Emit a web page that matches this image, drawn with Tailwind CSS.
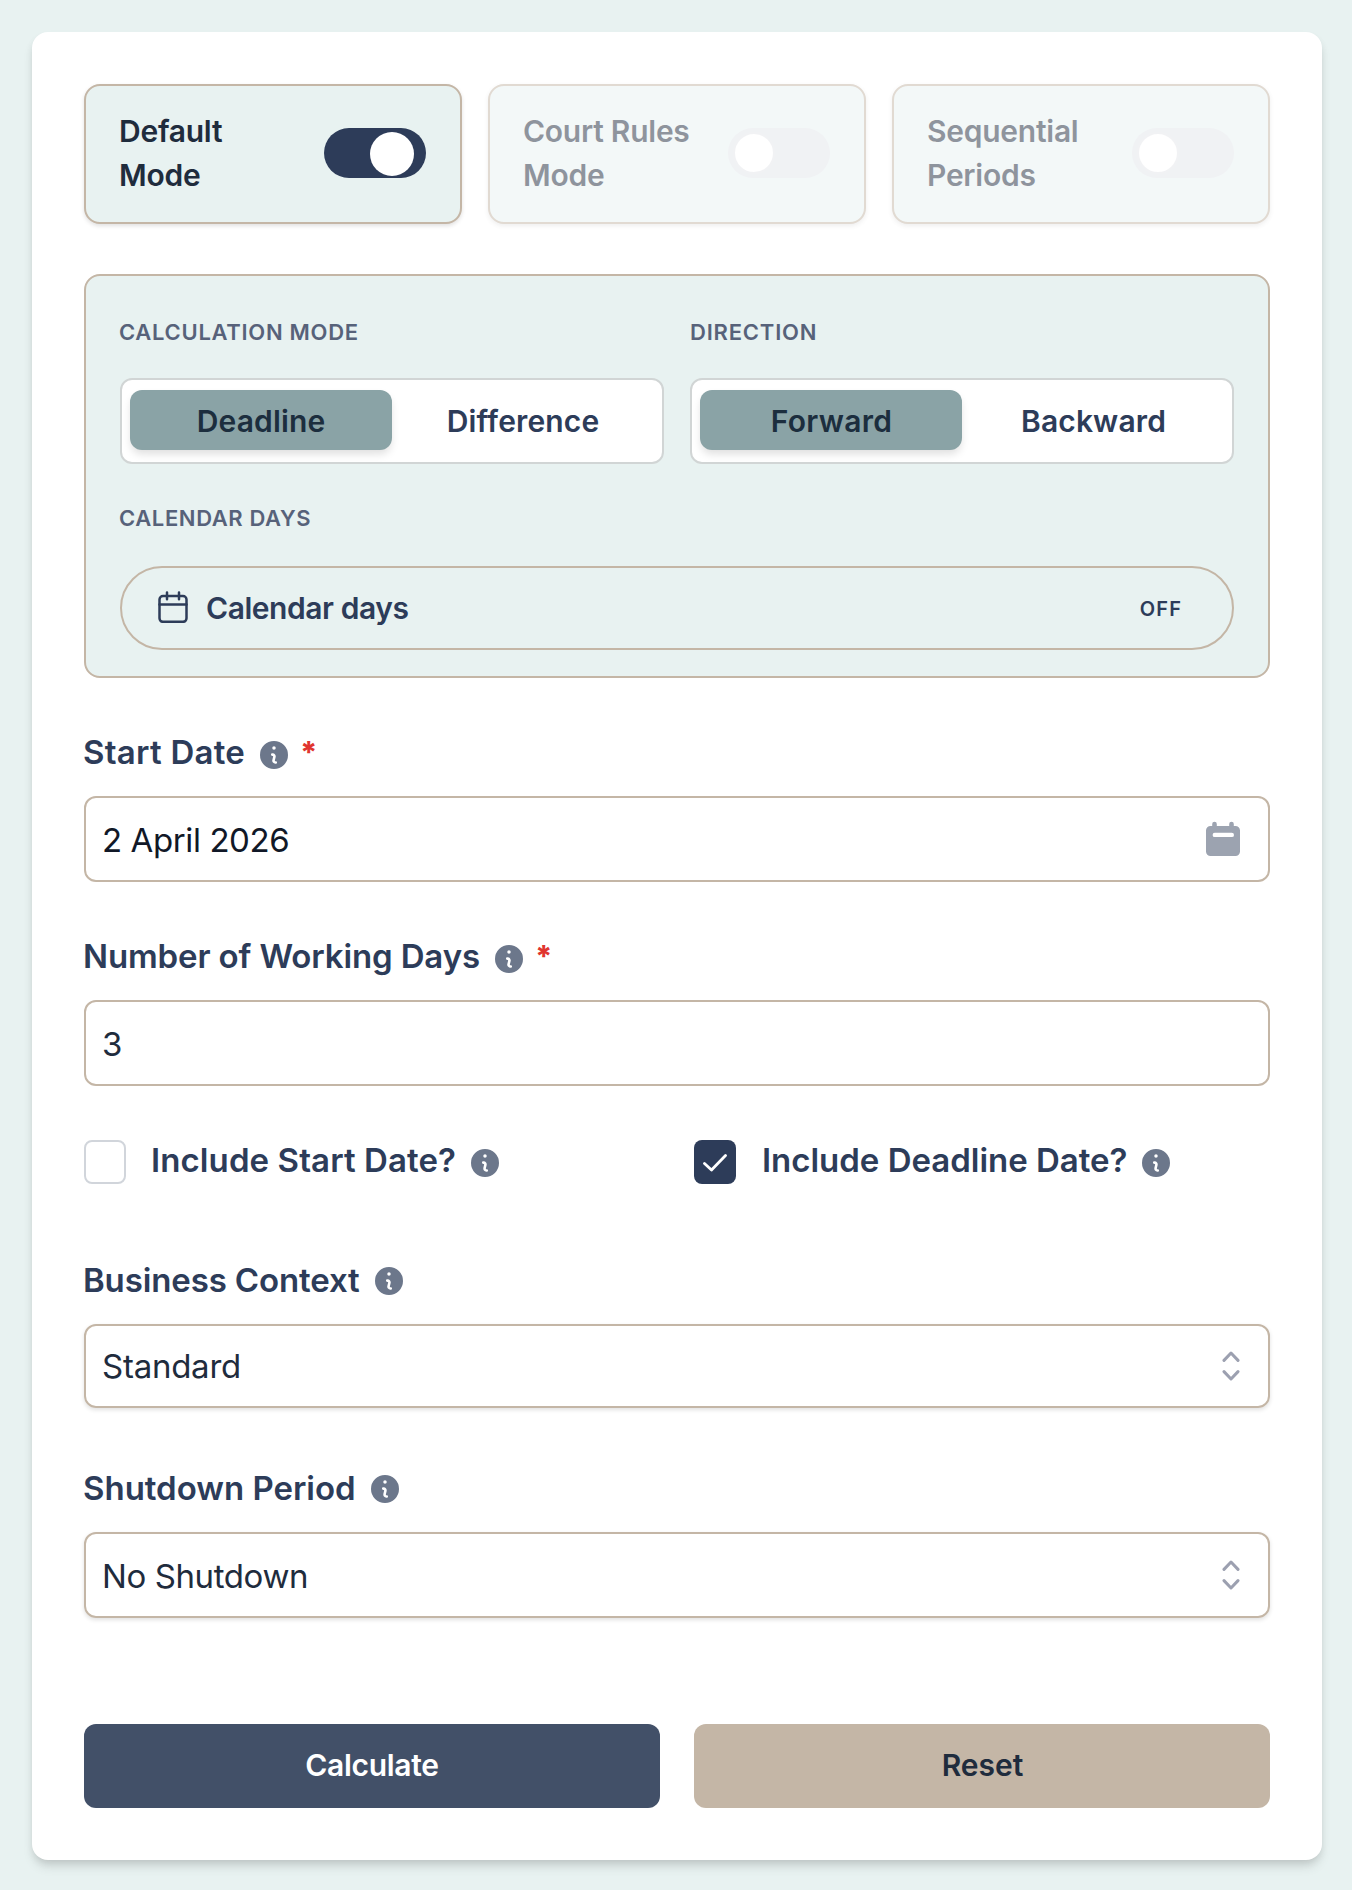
<!DOCTYPE html>
<html lang="en">
<head>
    <meta charset="UTF-8">
    <meta name="viewport" content="width=device-width, initial-scale=1.0">
    <title>Deadline Calculator</title>
    <script src="https://cdn.jsdelivr.net/npm/@tailwindcss/browser@4"></script>
</head>
<body class="min-h-screen bg-[#e8f2f1] px-[30px] pt-8 font-['Inter',sans-serif] text-[#2d3c59]">
    <!-- Shared icons -->
    <svg class="hidden">
        <symbol id="info" viewBox="2 2 16 16">
            <path fill="currentColor" fill-rule="evenodd" clip-rule="evenodd" d="M18 10a8 8 0 11-16 0 8 8 0 0116 0zm-7-4a1 1 0 11-2 0 1 1 0 012 0zM9 9a.75.75 0 000 1.5h.253a.25.25 0 01.244.304l-.459 2.066A1.75 1.75 0 0010.747 15H11a.75.75 0 000-1.5h-.253a.25.25 0 01-.244-.304l.459-2.066A1.75 1.75 0 009.253 9H9z"/>
        </symbol>
        <symbol id="updown" viewBox="0 0 18 30">
            <path fill="none" stroke="currentColor" stroke-width="3" stroke-linecap="round" stroke-linejoin="round" d="M2 9.400l7-7.400 7 7.400M2 20.600l7 7.400 7-7.400"/>
        </symbol>
    </svg>

    <div class="ml-0.5 h-[1828px] w-[1290px] rounded-2xl bg-white p-[52px] shadow-[0_8px_12px_-2px_rgba(0,0,0,0.12),0_4px_8px_-2px_rgba(0,0,0,0.1)]">
        <!-- Mode cards -->
        <div class="grid grid-cols-3 gap-[26px] text-[30px] leading-[44px] font-semibold tracking-[-0.25px] text-[#1f2c3d]">
            <div class="flex h-[140px] items-center justify-between rounded-2xl border-2 border-[#c4b6a6] bg-[#e8f2f1] pr-[34px] pb-0.5 pl-[33px] shadow-[0_2px_4px_rgba(0,0,0,0.12)]">
                <span>Default<br>Mode</span>
                <button class="flex h-[50px] w-[102px] items-center justify-end rounded-full bg-[#2d3c59] pt-0.5 pr-3">
                    <span class="size-11 rounded-full bg-white"></span>
                </button>
            </div>
            <div class="flex h-[140px] items-center justify-between rounded-2xl border-2 border-[#c4b6a6] bg-[#e8f2f3] pr-[34px] pb-0.5 pl-[33px] opacity-50 shadow-[0_2px_4px_rgba(0,0,0,0.12)]">
                <span>Court Rules<br>Mode</span>
                <button class="flex h-[50px] w-[102px] items-center rounded-full bg-[#e3e6ea] pl-[5px]">
                    <span class="size-[42px] rounded-full border-2 border-gray-200 bg-white"></span>
                </button>
            </div>
            <div class="flex h-[140px] items-center justify-between rounded-2xl border-2 border-[#c4b6a6] bg-[#e8f2f3] pr-[34px] pb-0.5 pl-[33px] opacity-50 shadow-[0_2px_4px_rgba(0,0,0,0.12)]">
                <span>Sequential<br>Periods</span>
                <button class="flex h-[50px] w-[102px] items-center rounded-full bg-[#e3e6ea] pl-[5px]">
                    <span class="size-[42px] rounded-full border-2 border-gray-200 bg-white"></span>
                </button>
            </div>
        </div>

        <!-- Calculation options -->
        <div class="mt-[50px] h-[404px] rounded-2xl border-2 border-[#c4b6a6] bg-[#e8f2f1] px-[34px] pt-10">
            <div class="grid grid-cols-2 gap-[26px]">
                <div>
                    <h3 class="-ml-px text-[22px] leading-8 font-semibold tracking-[0.7px] text-[#57627a]">CALCULATION MODE</h3>
                    <div class="mt-[30px] grid h-[86px] grid-cols-2 items-center rounded-xl border-2 border-[#d1d5d5] bg-white px-2 pb-0.5 text-[30px] font-semibold tracking-[0.15px]">
                        <button class="h-[60px] rounded-xl bg-[#8aa3a6] pt-0.5 text-[#1c2e3e] shadow-[0_5px_8px_-1px_rgba(0,0,0,0.13)]">Deadline</button>
                        <button class="h-[60px] pt-0.5">Difference</button>
                    </div>
                </div>
                <div>
                    <h3 class="text-[22px] leading-8 font-semibold tracking-[0.8px] text-[#57627a]">DIRECTION</h3>
                    <div class="mt-[30px] grid h-[86px] grid-cols-2 items-center rounded-xl border-2 border-[#d1d5d5] bg-white px-2 pb-0.5 text-[30px] font-semibold tracking-[0.15px]">
                        <button class="h-[60px] rounded-xl bg-[#8aa3a6] pt-0.5 pl-px tracking-[0.3px] text-[#1c2e3e] shadow-[0_5px_8px_-1px_rgba(0,0,0,0.13)]">Forward</button>
                        <button class="h-[60px] pt-0.5 pl-px">Backward</button>
                    </div>
                </div>
            </div>
            <h3 class="mt-[38px] -ml-px text-[22px] leading-8 font-semibold tracking-[0.6px] text-[#57627a]">CALENDAR DAYS</h3>
            <button class="mt-8 flex h-[84px] w-full items-center rounded-full border-2 border-[#c4b6a6] pr-[50px] pl-9">
                <svg class="mb-0.5 h-8 w-[30px]" viewBox="0 0 30 32" fill="none" stroke="currentColor" stroke-width="2.5" stroke-linecap="round">
                    <rect x="1.500" y="5" width="27" height="25.800" rx="3.500"/>
                    <path d="M1.500 13.500h27M9 1.600v6.600M21 1.600v6.600"/>
                </svg>
                <span class="ml-[18px] text-[30px] font-semibold tracking-[-0.45px]">Calendar days</span>
                <span class="ml-auto pt-0.5 text-xl font-semibold tracking-[1.1px]">OFF</span>
            </button>
        </div>

        <!-- Start date -->
        <label class="mt-[52px] -ml-px flex h-11 items-center text-[33px] font-semibold">
            <span class="pt-px tracking-[0.25px]">Start Date</span>
            <svg class="mt-[5px] ml-[15px] size-7 text-[#6c778b]"><use href="#info"/></svg>
            <span class="ml-3 text-[30px] font-extrabold text-[#e0352f]">*</span>
        </label>
        <div class="mt-[22px] flex h-[86px] items-center justify-between rounded-xl border-2 border-[#c4b6a6] pr-7 pl-4">
            <span class="pt-[3px] text-[33px] tracking-[-0.4px] text-[#111827]">2 April 2026</span>
            <svg class="h-9 w-[34px] text-[#9ca3b0]" viewBox="0 0 34 36" fill="currentColor">
                <path fill-rule="evenodd" d="M4.500 5H6.200V3a2.300 2.300 0 0 1 4.600 0v2h12.400V3a2.300 2.300 0 0 1 4.600 0v2h1.700A4.500 4.500 0 0 1 34 9.500v21a4.500 4.500 0 0 1-4.500 4.500h-25A4.500 4.500 0 0 1 0 30.500v-21A4.500 4.500 0 0 1 4.500 5zM8.800 11.700a2.200 2.200 0 0 0 0 4.400h17a2.200 2.200 0 0 0 0-4.400z"/>
            </svg>
        </div>

        <!-- Working days -->
        <label class="mt-[52px] -ml-px flex h-11 items-center text-[33px] font-semibold">
            <span class="pt-px tracking-[-0.13px]">Number of Working Days</span>
            <svg class="mt-[5px] ml-[15px] size-7 text-[#6c778b]"><use href="#info"/></svg>
            <span class="ml-3 text-[30px] font-extrabold text-[#e0352f]">*</span>
        </label>
        <div class="mt-[22px] flex h-[86px] items-center rounded-xl border-2 border-[#c4b6a6] px-4">
            <span class="pt-[3px] text-[33px] text-[#1f2c3d]">3</span>
        </div>

        <!-- Include options -->
        <div class="mt-[54px] grid h-11 grid-cols-2 gap-[34px] text-[33px] leading-[40px] font-semibold">
            <label class="flex h-11 items-center">
                <span class="h-11 w-[42px] rounded-lg border-2 border-[#d1d5db] bg-white"></span>
                <span class="ml-[25px] pb-1 tracking-[0.1px]">Include Start Date?</span>
                <svg class="mt-0.5 ml-[15px] size-7 text-[#6c778b]"><use href="#info"/></svg>
            </label>
            <label class="flex h-11 items-center">
                <span class="flex h-11 w-[42px] items-center justify-center rounded-lg bg-[#2d3c59] text-white">
                    <svg class="mt-0.5 h-[18px] w-6" viewBox="0 0 24 18" fill="none" stroke="currentColor" stroke-width="2.8" stroke-linecap="round" stroke-linejoin="round"><path d="M1.500 9.500l7 6.500L22.500 1.500"/></svg>
                </span>
                <span class="ml-[26px] pb-1 tracking-[-0.02px]">Include Deadline Date?</span>
                <svg class="mt-0.5 ml-[15px] size-7 text-[#6c778b]"><use href="#info"/></svg>
            </label>
        </div>

        <!-- Business context -->
        <label class="mt-[74px] -ml-px flex h-11 items-center text-[33px] font-semibold">
            <span class="pt-px tracking-[-0.13px]">Business Context</span>
            <svg class="mt-0.5 ml-[15px] size-7 text-[#6c778b]"><use href="#info"/></svg>
        </label>
        <div class="mt-[22px] flex h-[84px] items-center justify-between rounded-xl border-2 border-[#c4b6a6] pr-7 pl-4 shadow-[0_2px_4px_rgba(0,0,0,0.12)]">
            <span class="pt-px text-[33px] tracking-[-0.25px] text-[#1f2c3d]">Standard</span>
            <svg class="h-[30px] w-[18px] text-[#9ca0b0]"><use href="#updown"/></svg>
        </div>

        <!-- Shutdown period -->
        <label class="mt-[58px] -ml-px flex h-11 items-center text-[33px] font-semibold">
            <span class="pt-px tracking-[-0.02px]">Shutdown Period</span>
            <svg class="mt-0.5 ml-[15px] size-7 text-[#6c778b]"><use href="#info"/></svg>
        </label>
        <div class="mt-[22px] flex h-[86px] items-center justify-between rounded-xl border-2 border-[#c4b6a6] pr-7 pl-4 shadow-[0_2px_4px_rgba(0,0,0,0.12)]">
            <span class="pt-[3px] text-[33px] tracking-[-0.4px] text-[#1f2c3d]">No Shutdown</span>
            <svg class="h-[30px] w-[18px] text-[#9ca0b0]"><use href="#updown"/></svg>
        </div>

        <!-- Actions -->
        <div class="mt-[106px] grid grid-cols-2 gap-[34px] text-[30px] font-semibold">
            <button class="h-[84px] rounded-xl bg-[#425068] pb-px tracking-[-0.3px] text-white">Calculate</button>
            <button class="h-[84px] rounded-xl bg-[#c4b6a6] pb-px pl-px text-[#1f2c3d]">Reset</button>
        </div>
    </div>
</body>
</html>
